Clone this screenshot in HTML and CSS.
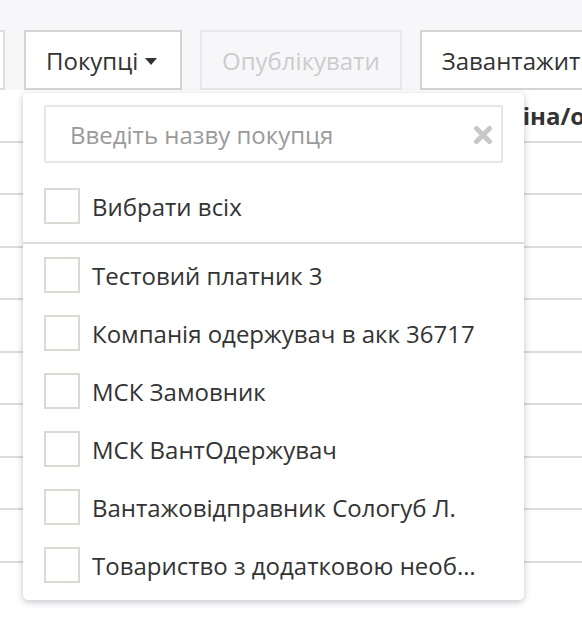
FILE: index.html
```
<!DOCTYPE html>
<html lang="uk">
<head>
    <meta charset="UTF-8">
    <meta name="viewport" content="width=device-width, initial-scale=1.0">
    <title>Покупці</title>
    <link rel="stylesheet" href="styles.css">
</head>
<body>
    <div class="toolbar">
        <button class="btn btn-cut"></button>
        <button class="btn btn-buyers">Покупці <span class="caret"></span></button>
        <button class="btn" disabled>Опублікувати</button>
        <button class="btn">Завантажити</button>
    </div>

    <div class="table">
        <div class="row head">
            <div class="cell name"></div>
            <div class="cell price">Ціна/од.</div>
        </div>
        <div class="row"></div>
        <div class="row"></div>
        <div class="row"></div>
        <div class="row"></div>
        <div class="row"></div>
        <div class="row"></div>
        <div class="row"></div>
        <div class="row"></div>
    </div>

    <div class="dropdown">
        <div class="search">
            <input type="text" placeholder="Введіть назву покупця">
            <span class="clear">
                <svg width="20" height="20" viewBox="0 0 20 20">
                    <path d="M3.5 3.5 L16.5 16.5 M16.5 3.5 L3.5 16.5" stroke="#c8c8c8" stroke-width="5" stroke-linecap="round"/>
                </svg>
            </span>
        </div>
        <label class="option all">
            <span class="check"></span>
            <span>Вибрати всіх</span>
        </label>
        <div class="list">
            <label class="option"><span class="check"></span><span>Тестовий платник 3</span></label>
            <label class="option"><span class="check"></span><span>Компанія одержувач в акк 36717</span></label>
            <label class="option"><span class="check"></span><span>МСК Замовник</span></label>
            <label class="option"><span class="check"></span><span>МСК ВантОдержувач</span></label>
            <label class="option"><span class="check"></span><span>Вантажовідправник Сологуб Л.</span></label>
            <label class="option"><span class="check"></span><span class="ellipsis">Товариство з додатковою необмеженою відповідальністю</span></label>
        </div>
    </div>
</body>
</html>
```
FILE: styles.css
```
body {
    margin: 0;
    font-family: "Open Sans", "Noto Sans", sans-serif;
    color: #333;
    background: #fff;
    overflow: hidden;
}
.toolbar {
    display: flex;
    gap: 18px;
    height: 90px;
    padding-top: 30px;
    box-sizing: border-box;
    background: #f7f7f9;
    white-space: nowrap;
    overflow: hidden;
}
.btn {
    flex: none;
    height: 60px;
    padding: 0 20px;
    font-family: inherit;
    font-size: 24px;
    color: #333;
    background: #fff;
    border: 2px solid #d4d4d4;
    border-radius: 0;
}
.btn:disabled {
    color: #ccc;
    background: #f7f7f9;
    border-color: #e8e8ea;
}
.btn-cut {
    width: 100px;
    margin-left: -95px;
    border-color: #dedede;
}
.btn-buyers {
    width: 158px;
    margin-left: 1px;
    display: flex;
    align-items: center;
}
.caret {
    display: inline-block;
    margin-left: 7px;
    margin-top: 2px;
    border-left: 6.5px solid transparent;
    border-right: 6.5px solid transparent;
    border-top: 7px solid #333;
}
.table .row {
    display: flex;
    height: 52.5px;
    box-sizing: border-box;
    border-bottom: 2px solid #dcdcdc;
}
.row.head {
    align-items: center;
    font-weight: bold;
    font-size: 24px;
    white-space: nowrap;
    overflow: hidden;
}
.cell.name {
    flex: none;
    width: 504px;
}
.dropdown {
    position: absolute;
    left: 23px;
    top: 93px;
    width: 501px;
    padding-bottom: 17px;
    background: #fff;
    border-radius: 5px;
    box-shadow: 0 2px 7px rgba(40, 40, 70, 0.28);
}
.search {
    position: relative;
    padding: 12px 21px 12px 21px;
}
.search input {
    display: block;
    width: 100%;
    height: 58px;
    box-sizing: border-box;
    padding: 0 50px 0 24px;
    font-family: inherit;
    font-size: 24px;
    color: #333;
    border: 2px solid #e6e6e6;
    border-radius: 2px;
    outline: none;
}
.search input::placeholder {
    color: #9a9a9a;
}
.clear {
    position: absolute;
    right: 31px;
    top: 32px;
    width: 20px;
    height: 20px;
}
.option {
    display: flex;
    align-items: center;
    gap: 12px;
    padding: 0 21px;
    font-size: 24px;
    color: #333;
}
.option.all {
    padding-top: 13px;
    padding-bottom: 18px;
    border-bottom: 2px solid #dcdcdc;
}
.list {
    display: flex;
    flex-direction: column;
    gap: 22px;
    padding-top: 13px;
}
.check {
    flex: none;
    width: 36px;
    height: 36px;
    box-sizing: border-box;
    border: 2px solid #dcd8d4;
    background: #fff;
}
.ellipsis {
    max-width: 386px;
    overflow: hidden;
    white-space: nowrap;
    text-overflow: ellipsis;
}
```
